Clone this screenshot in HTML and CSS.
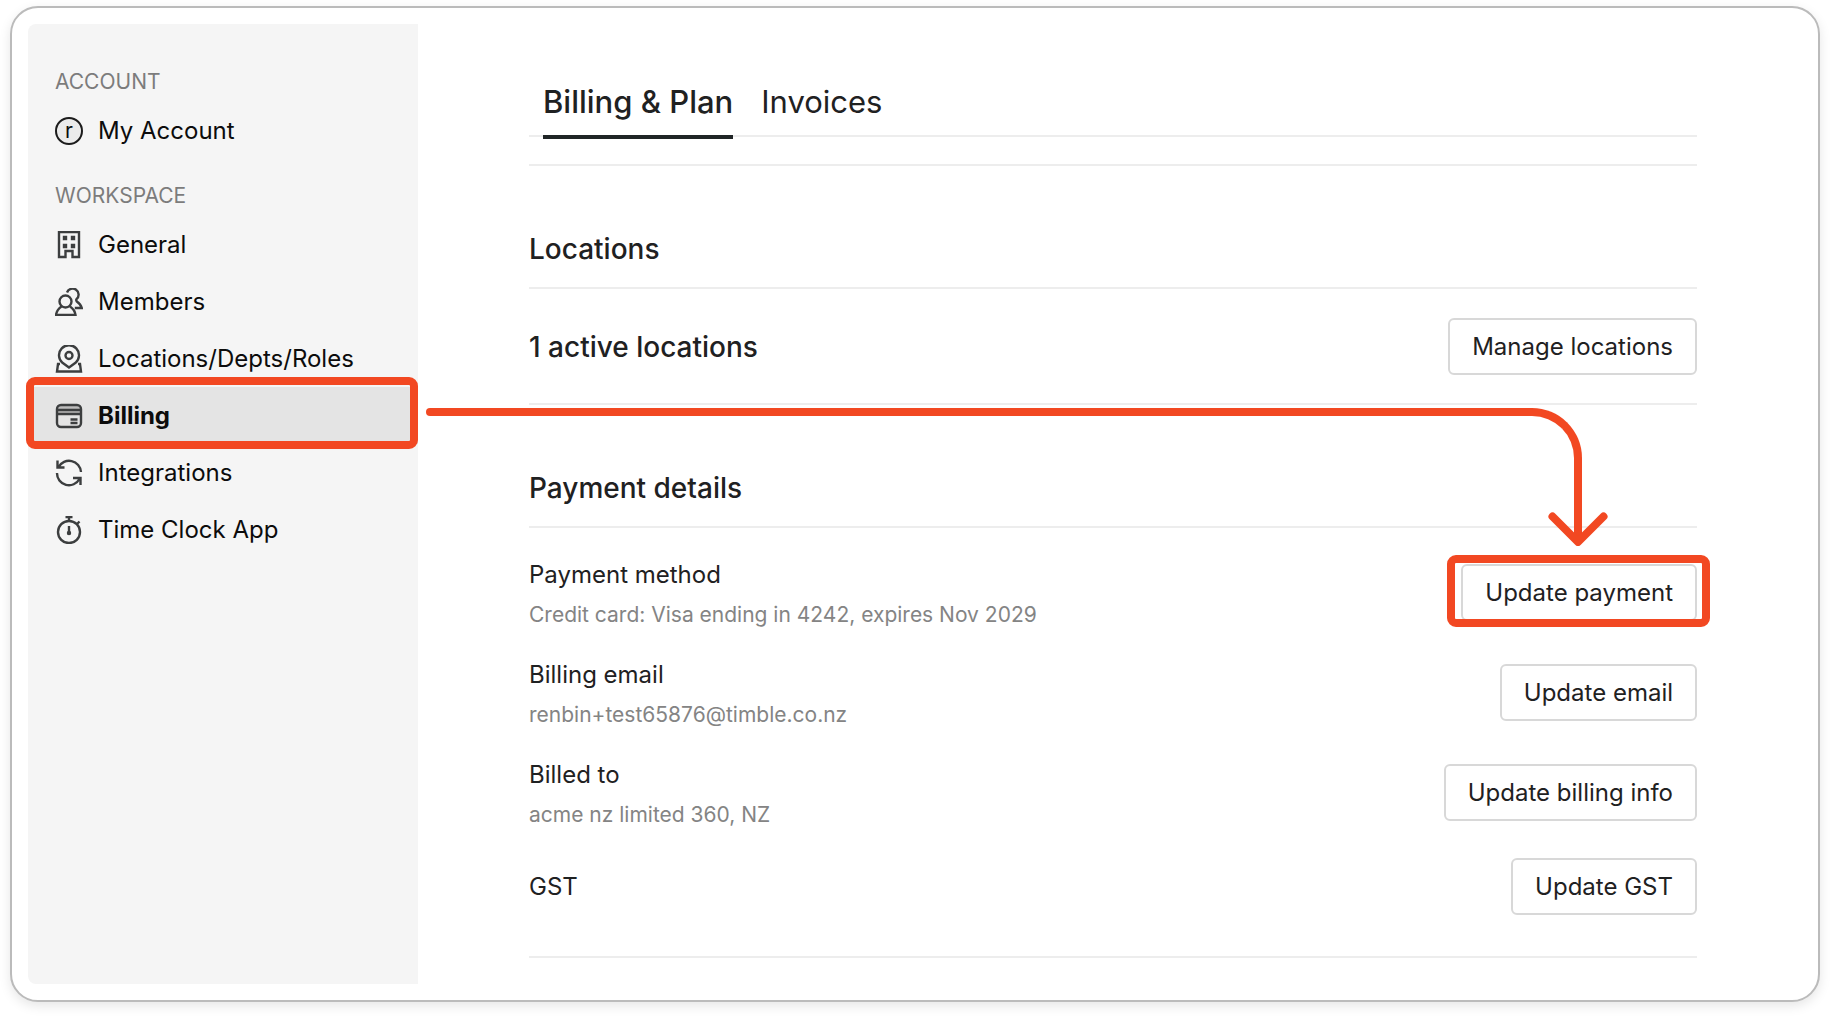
FILE: index.html
```html
<!DOCTYPE html>
<html lang="en">
<head>
<meta charset="utf-8">
<meta name="viewport" content="width=device-width, initial-scale=1">
<title>Billing &amp; Plan</title>
<link rel="stylesheet" href="styles.css">
</head>
<body>
<div class="window">
  <nav class="sidebar" aria-label="Settings">
    <h2 class="nav-heading">ACCOUNT</h2>
    <a class="nav-item" href="#account"><span class="avatar">r</span>My Account</a>

    <h2 class="nav-heading">WORKSPACE</h2>
    <a class="nav-item" href="#general">
      <svg class="icon" viewBox="0 0 28 28"><path d="M4 1h20v25h-6.500v-6h-7v6H4z"/><path d="M9 6h2v2H9zM17 6h2v2h-2zM9 14h2v2H9zM17 14h2v2h-2z"/></svg>
      General
    </a>
    <a class="nav-item" href="#members">
      <svg class="icon" viewBox="0 0 28 28"><circle cx="10.500" cy="13.500" r="6"/><path d="M6.500 18.500C3.500 20.500 1.500 23.500 1 27h19.500c-.5-3.500-2.500-6.500-5.500-8.500M12 4.500a6 6 0 1 1 9.500 6.700c-.5.800-.3 1.500.3 2.300 2.200 1.500 4.200 3.500 5 6.500h-7"/></svg>
      Members
    </a>
    <a class="nav-item" href="#locations">
      <svg class="icon" viewBox="0 0 28 28"><path d="M14 22.500l-6.500-4.700a10 10 0 1 1 13 0z"/><circle cx="14" cy="10.500" r="3.500"/><path d="M5 19H3L2 26.500h24L25 19h-2"/></svg>
      Locations/Depts/Roles
    </a>
    <a class="nav-item nav-item-active" href="#billing" aria-current="page">
      <svg class="icon" viewBox="0 0 28 28"><path class="icon-band" d="M2 4h24v8H2z"/><rect x="2" y="3" width="24" height="22" rx="4"/><path d="M2 8h24M2 12h24M15.500 17.500h7M15.500 21h7"/></svg>
      Billing
      <span class="highlight highlight-nav"></span>
    </a>
    <a class="nav-item" href="#integrations">
      <svg class="icon" viewBox="0 0 28 28"><path d="M26 13A12 12 0 0 0 3.500 8M2.500 1.500V8.500H9.500M2 14a12 12 0 0 0 22.500 6M25.500 26v-7H18"/></svg>
      Integrations
    </a>
    <a class="nav-item" href="#time-clock">
      <svg class="icon" viewBox="0 0 28 28"><circle cx="14" cy="16" r="11"/><path d="M10.500 1h7M14 1v4M22 8l2.500-2.500M14 10v9"/><circle cx="14" cy="17" r="1"/></svg>
      Time Clock App
    </a>
  </nav>

  <main class="content">
    <nav class="tabs" aria-label="Billing">
      <a class="tab tab-active" href="#plan" aria-current="page">Billing &amp; Plan</a>
      <a class="tab" href="#invoices">Invoices</a>
    </nav>

    <section class="section section-locations">
      <h2 class="section-title">Locations</h2>
      <div class="location-row">
        <p class="location-count">1 active locations</p>
        <button class="button" type="button">Manage locations</button>
      </div>
    </section>

    <section class="section">
      <h2 class="section-title">Payment details</h2>
      <div class="detail-list">
        <div class="detail">
          <div class="detail-text">
            <h3 class="detail-label">Payment method</h3>
            <p class="detail-value">Credit card: Visa ending in 4242, expires Nov 2029</p>
          </div>
          <div class="detail-action">
            <button class="button" type="button">Update payment</button>
            <span class="highlight highlight-button"></span>
          </div>
        </div>
        <div class="detail">
          <div class="detail-text">
            <h3 class="detail-label">Billing email</h3>
            <p class="detail-value">renbin+test65876@timble.co.nz</p>
          </div>
          <div class="detail-action"><button class="button" type="button">Update email</button></div>
        </div>
        <div class="detail">
          <div class="detail-text">
            <h3 class="detail-label">Billed to</h3>
            <p class="detail-value">acme nz limited 360, NZ</p>
          </div>
          <div class="detail-action"><button class="button" type="button">Update billing info</button></div>
        </div>
        <div class="detail detail-single">
          <h3 class="detail-label">GST</h3>
          <button class="button" type="button">Update GST</button>
        </div>
      </div>
    </section>

    <div class="connector">
      <svg class="connector-head" viewBox="0 0 60 34"><path d="M4.500 4.500L30 30 55.500 4.500"/></svg>
    </div>
  </main>
</div>
</body>
</html>
```

FILE: styles.css
```css
:root {
  --accent: #f24822;
  --line: #ededed;
  --ink: #1f2122;
  --muted: #848484;
}

* {
  box-sizing: border-box;
}

body {
  display: flex;
  min-height: 100vh;
  margin: 0;
  padding: 6px 10px 14px;
  background: #fff;
  color: var(--ink);
  font-family: Inter, "Liberation Sans", sans-serif;
  font-size: 24px;
}

h2,
h3,
p {
  margin: 0;
  font-weight: 400;
}

a {
  color: inherit;
  text-decoration: none;
}

.window {
  display: flex;
  flex: 1;
  min-width: 0;
  padding: 16px 0 16px 16px;
  border: 2px solid #bbb;
  border-radius: 28px;
  background: #fff;
  box-shadow: 0 4px 12px rgba(0, 0, 0, 0.1);
}

/* Sidebar */

.sidebar {
  flex: 0 0 390px;
  padding-top: 21px;
  border-radius: 8px 0 0 8px;
  background: #f5f5f5;
  color: #0c0c0c;
}

.nav-heading {
  padding: 24px 27px 8px;
  color: #7c7c7c;
  font-size: 21px;
  line-height: 25px;
}

.nav-item {
  position: relative;
  display: flex;
  align-items: center;
  gap: 15px;
  height: 57px;
  padding: 0 27px;
}

.nav-item-active {
  background: #e4e4e4;
  font-weight: 700;
}

.icon {
  flex: none;
  width: 28px;
  height: 28px;
  fill: none;
  stroke: #3c3e3f;
  stroke-width: 2.4;
}

.icon-band {
  fill: #bdbdbd;
  stroke: none;
}

.avatar {
  display: flex;
  flex: none;
  align-items: center;
  justify-content: center;
  width: 28px;
  height: 28px;
  border: 2px solid #1c1c1c;
  border-radius: 50%;
  background: #ebebeb;
  font-size: 21px;
  line-height: 24px;
}

/* Tabs */

.content {
  position: relative;
  flex: 1;
  min-width: 0;
  padding: 48px 121px 26px 111px;
}

.tabs {
  display: flex;
  gap: 28px;
  padding: 0 14px;
  border-bottom: 2px solid var(--line);
  font-size: 31px;
  line-height: 36px;
}

.tab {
  margin-bottom: -4px;
  padding: 12px 0 15px;
  border-bottom: 4px solid transparent;
}

.tab-active {
  border-color: #202526;
  font-weight: 500;
}

/* Sections */

.section {
  border-bottom: 2px solid var(--line);
}

.section-locations {
  margin-top: 27px;
  border-top: 2px solid var(--line);
}

.section-title {
  padding: 66px 0 21px;
  border-bottom: 2px solid var(--line);
  font-size: 28px;
  font-weight: 500;
  line-height: 34px;
}

.location-row {
  display: flex;
  align-items: center;
  justify-content: space-between;
  padding: 29px 0 28px;
}

.location-count {
  font-size: 28px;
  font-weight: 500;
}

.detail-list {
  display: flex;
  flex-direction: column;
  gap: 24px;
  padding: 30px 0 41px;
}

.detail {
  display: flex;
  align-items: flex-start;
  justify-content: space-between;
}

.detail-single {
  align-items: center;
}

.detail-text {
  padding-bottom: 2px;
}

.detail-label {
  font-size: 24px;
  line-height: 34px;
}

.detail-value {
  margin-top: 6px;
  color: var(--muted);
  font-size: 21px;
  line-height: 34px;
}

.detail-action {
  position: relative;
  margin-top: 6px;
}

.button {
  display: block;
  height: 57px;
  padding: 0 22px;
  border: 2px solid #d8d8d8;
  border-radius: 6px;
  background: #fff;
  color: inherit;
  font: inherit;
}

/* Callouts */

.highlight {
  position: absolute;
  border: 8px solid var(--accent);
  border-radius: 9px;
}

.highlight-nav {
  inset: -10px 0 -5px -2px;
}

.highlight-button {
  inset: -9px -13px -6px -14px;
}

.connector {
  position: absolute;
  top: 384px;
  right: 236px;
  left: 12px;
  height: 132px;
  border-top: 8px solid var(--accent);
  border-right: 8px solid var(--accent);
  border-top-right-radius: 50px;
  pointer-events: none;
}

.connector::before {
  position: absolute;
  top: -8px;
  left: -4px;
  width: 8px;
  height: 8px;
  border-radius: 50%;
  background: var(--accent);
  content: "";
}

.connector-head {
  position: absolute;
  right: -34px;
  bottom: -6px;
  width: 60px;
  height: 34px;
  fill: none;
  stroke: var(--accent);
  stroke-linecap: round;
  stroke-linejoin: round;
  stroke-width: 8;
}
```
